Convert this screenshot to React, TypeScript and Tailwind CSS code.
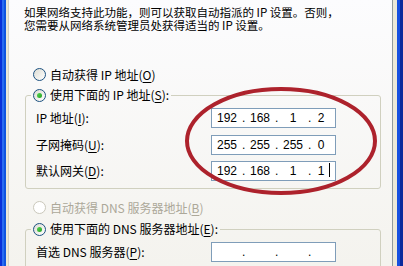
import type { ReactNode } from "react";

const cjk = { fontFamily: '"Noto Sans CJK SC", "Liberation Sans", sans-serif' };

const Radio = ({ checked, disabled }: { checked?: boolean; disabled?: boolean }) => (
  <span
    className={`relative flex h-[13px] w-[13px] shrink-0 items-center justify-center rounded-full border ${
      disabled
        ? "border-[#cac8bb] bg-white"
        : "border-[#1c5180] bg-gradient-to-br from-[#dcdcd3] to-white"
    }`}
  >
    {checked && (
      <span className="h-[5px] w-[5px] rounded-full bg-gradient-to-br from-[#55d651] to-[#21a121]" />
    )}
  </span>
);

// label text with one underlined access key, e.g. "(O)"
const Label = ({ text, hotkey, tail = ")" }: { text: string; hotkey: string; tail?: string }) => (
  <span className="whitespace-pre">
    {text}(<span className="underline underline-offset-2">{hotkey}</span>
    {tail}
  </span>
);

const IpBox = ({ parts, caret }: { parts: string[]; caret?: boolean }) => (
  <div
    className="flex h-[20px] w-[125px] items-center border border-[#7f9db9] bg-white text-[12px] text-black"
    style={{ fontFamily: '"Liberation Sans", Arial, sans-serif' }}
  >
    {parts.map((p, i) => (
      <div key={i} className="flex items-center">
        {i > 0 && <span className="w-[3px] text-center">.</span>}
        <span className={`relative text-center ${i === 3 ? "w-[20px]" : "w-[30px]"}`}>
          {p}
          {caret && i === 3 && (
            <span className="absolute top-[1px] right-[1px] h-[14px] w-[1px] bg-black" />
          )}
        </span>
      </div>
    ))}
  </div>
);

const Row = ({ label, children }: { label: ReactNode; children: ReactNode }) => (
  <div className="flex h-[20px] items-center">
    <div className="w-[175px]">{label}</div>
    {children}
  </div>
);

const Group = ({ legend, children }: { legend: ReactNode; children: ReactNode }) => (
  <fieldset className="ml-[1px] w-[356px] rounded-[3px] border border-[#d0d0bf] pr-[10px] pb-[7px] pl-[10px]">
    <legend className="-ml-[5px] flex h-[14px] items-center gap-[4px] px-[2px]">{legend}</legend>
    <div className="flex flex-col gap-[6.5px] pt-[6px]">{children}</div>
  </fieldset>
);

export default function App() {
  return (
    <div className="relative flex h-[266px] w-[403px] overflow-hidden text-[12px] text-black" style={cjk}>
      {/* window frame, left */}
      <div className="w-[2px] bg-[#0831d9]" />
      <div className="w-[2px] bg-[#2a6cf0]" />
      <div className="w-[2px] bg-[#0f55e0]" />
      <div className="w-[2px] bg-[#ece9d8]" />
      <div className="w-[1px] bg-[#d6d3c6]" />

      {/* tab page */}
      <div className="flex-1 bg-gradient-to-b from-[#fcfcfe] to-[#f4f3ee] pt-[6px] pl-[15px]">
        <div className="text-[11.5px] leading-[12.5px] whitespace-nowrap">
          <div>如果网络支持此功能，则可以获取自动指派的 IP 设置。否则，</div>
          <div>您需要从网络系统管理员处获得适当的 IP 设置。</div>
        </div>

        <div className="mt-[37px] ml-[9px] flex h-[13px] items-center gap-[4px]">
          <Radio />
          <Label text="自动获得 IP 地址" hotkey="O" />
        </div>

        <div className="mt-[7px]">
          <Group
            legend={
              <>
                <Radio checked />
                <Label text="使用下面的 IP 地址" hotkey="S" tail="):" />
              </>
            }
          >
            <Row label={<Label text="IP 地址" hotkey="I" tail="):" />}>
              <IpBox parts={["192", "168", "1", "2"]} />
            </Row>
            <Row label={<Label text="子网掩码" hotkey="U" tail="):" />}>
              <IpBox parts={["255", "255", "255", "0"]} />
            </Row>
            <Row label={<Label text="默认网关" hotkey="D" tail="):" />}>
              <IpBox parts={["192", "168", "1", "1"]} caret />
            </Row>
          </Group>
        </div>

        <div className="mt-[12px] ml-[9px] flex h-[13px] items-center gap-[4px] text-[#aca899]">
          <Radio disabled />
          <Label text="自动获得 DNS 服务器地址" hotkey="B" />
        </div>

        <div className="mt-[8px]">
          <Group
            legend={
              <>
                <Radio checked />
                <Label text="使用下面的 DNS 服务器地址" hotkey="E" tail="):" />
              </>
            }
          >
            <Row label={<Label text="首选 DNS 服务器" hotkey="P" tail="):" />}>
              <IpBox parts={["", "", "", ""]} />
            </Row>
          </Group>
        </div>
      </div>

      {/* window frame, right */}
      <div className="w-[1px] bg-[#919b9c]" />
      <div className="w-[4px] bg-[#ece9d8]" />
      <div className="w-[3px] bg-[#1650e0]" />
      <div className="w-[3px] bg-[#0a2a9c]" />

      {/* red annotation ring */}
      <svg className="pointer-events-none absolute top-[86px] left-[184px]" width="194" height="110">
        <ellipse cx="97" cy="55" rx="94" ry="52" fill="none" stroke="#ad222c" strokeWidth="4" />
      </svg>
    </div>
  );
}
